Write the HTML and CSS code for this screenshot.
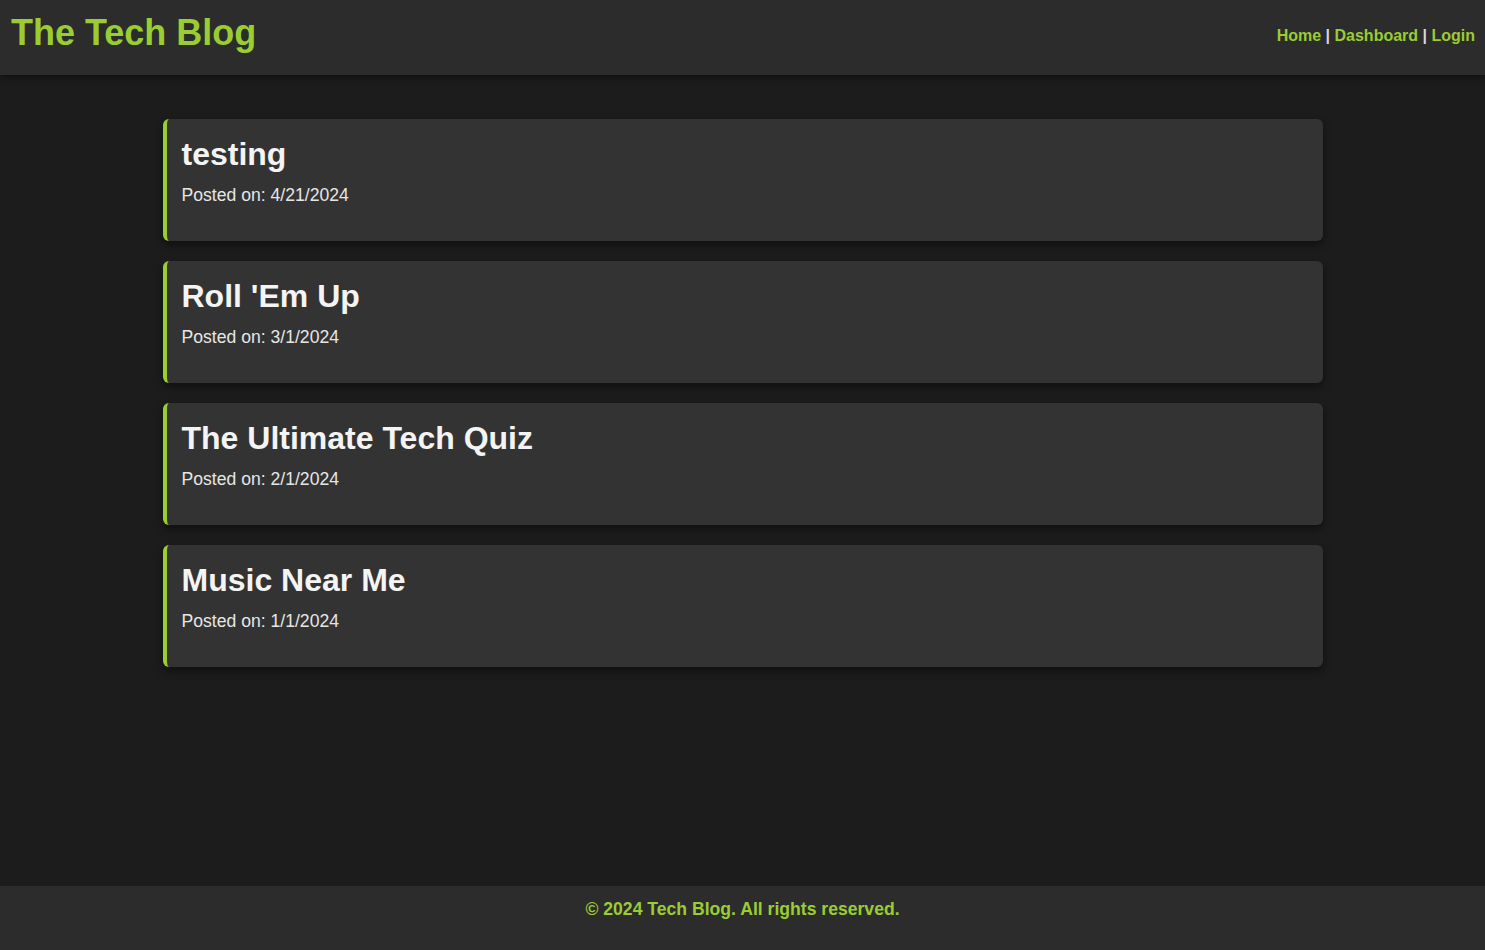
FILE: index.html
```html
<!DOCTYPE html>
<html lang="en">
<head>
<meta charset="UTF-8">
<title>The Tech Blog</title>
<link rel="stylesheet" href="styles.css">
</head>
<body>
<header class="site-header">
  <h1 class="logo">The Tech Blog</h1>
  <nav class="nav">
    <a href="#">Home</a> | <a href="#">Dashboard</a> | <a href="#">Login</a>
  </nav>
</header>
<main class="main">
  <article class="post">
    <h2 class="post-title">testing</h2>
    <p class="post-date">Posted on: 4/21/2024</p>
  </article>
  <article class="post">
    <h2 class="post-title">Roll 'Em Up</h2>
    <p class="post-date">Posted on: 3/1/2024</p>
  </article>
  <article class="post">
    <h2 class="post-title">The Ultimate Tech Quiz</h2>
    <p class="post-date">Posted on: 2/1/2024</p>
  </article>
  <article class="post">
    <h2 class="post-title">Music Near Me</h2>
    <p class="post-date">Posted on: 1/1/2024</p>
  </article>
</main>
<footer class="site-footer">
  <p class="copyright">© 2024 Tech Blog. All rights reserved.</p>
</footer>
</body>
</html>
```
FILE: styles.css
```css
* { box-sizing: border-box; }
html, body { margin: 0; padding: 0; }
body {
  font-family: "Liberation Sans", Arial, sans-serif;
  background: #1c1c1c;
  color: #f4f4f4;
  min-height: 100vh;
  display: flex;
  flex-direction: column;
}
.site-header {
  background: #2c2c2c;
  height: 75px;
  padding: 12px 10px 0 11px;
  display: flex;
  justify-content: space-between;
  align-items: flex-start;
  box-shadow: 0 2px 6px rgba(0, 0, 0, 0.5);
  position: relative;
  z-index: 1;
}
.logo {
  margin: 0;
  font-size: 36px;
  font-weight: bold;
  color: #9acd32;
}
.nav {
  padding-top: 15px;
  font-size: 16px;
  font-weight: bold;
  color: #d8d8d8;
}
.nav a {
  color: #9acd32;
  text-decoration: none;
}
.main {
  flex: 1;
  width: 1160px;
  margin: 44px auto 0;
  display: flex;
  flex-direction: column;
  gap: 20px;
}
.post {
  background: #333333;
  border-left: 4px solid #9acd32;
  border-radius: 6px;
  padding: 17px 15px 15px;
  height: 122px;
  box-shadow: 0 4px 8px rgba(0, 0, 0, 0.45);
}
.post-title {
  margin: 0;
  font-size: 32px;
  font-weight: bold;
  color: #f4f4f4;
}
.post-date {
  margin: 12px 0 0;
  font-size: 17.6px;
  color: #e6e6e6;
}
.site-footer {
  background: #2c2c2c;
  height: 64px;
  padding-top: 13px;
  text-align: center;
}
.copyright {
  margin: 0;
  font-size: 17.6px;
  font-weight: bold;
  color: #9acd32;
}
```
